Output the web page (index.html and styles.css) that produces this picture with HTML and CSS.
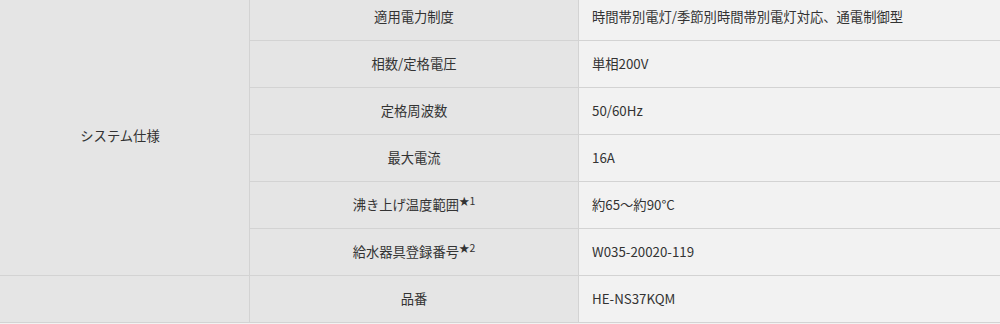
FILE: index.html
```html
<!DOCTYPE html>
<html lang="ja">
<head>
<meta charset="utf-8">
<link rel="stylesheet" href="styles.css">
</head>
<body>
<table class="spec">
  <colgroup>
    <col class="c1"><col class="c2"><col class="c3">
  </colgroup>
  <tbody>
    <tr>
      <th class="group" rowspan="6">システム仕様</th>
      <th class="label">適用電力制度</th>
      <td class="value">時間帯別電灯/季節別時間帯別電灯対応、通電制御型</td>
    </tr>
    <tr>
      <th class="label">相数/定格電圧</th>
      <td class="value">単相200V</td>
    </tr>
    <tr>
      <th class="label">定格周波数</th>
      <td class="value">50/60Hz</td>
    </tr>
    <tr>
      <th class="label">最大電流</th>
      <td class="value">16A</td>
    </tr>
    <tr>
      <th class="label">沸き上げ温度範囲<sup class="note">★1</sup></th>
      <td class="value">約65～約90°C</td>
    </tr>
    <tr>
      <th class="label">給水器具登録番号<sup class="note">★2</sup></th>
      <td class="value">W035-20020-119</td>
    </tr>
    <tr>
      <th class="group"></th>
      <th class="label">品番</th>
      <td class="value">HE-NS37KQM</td>
    </tr>
  </tbody>
</table>
</body>
</html>
```
FILE: styles.css
```css
html, body {
  margin: 0;
  padding: 0;
  background: #f2f2f2;
}
body {
  font-family: "Noto Sans CJK JP", "Noto Sans", sans-serif;
  font-size: 13.3px;
  color: #333;
}
.spec {
  width: 1000px;
  margin-top: -7px;
  border-collapse: separate;
  border-spacing: 0;
  table-layout: fixed;
}
.c1 { width: 250px; }
.c2 { width: 329px; }
.c3 { width: 421px; }
.spec th, .spec td {
  height: 46px;
  padding: 0;
  border-bottom: 1px solid #d3d3d3;
  font-weight: 400;
  line-height: 20px;
  vertical-align: middle;
}
.spec tr:first-child th, .spec tr:first-child td {
  height: 47px;
}
.group {
  background: #e5e5e5;
  border-right: 1px solid #d3d3d3;
  text-align: center;
}
.spec th.group[rowspan] {
  padding: 4px 9px 0 0;
}
.label {
  background: #e5e5e5;
  border-right: 1px solid #d3d3d3;
  text-align: center;
}
.value {
  background: #f2f2f2;
  text-align: left;
  padding-left: 13px !important;
}
.note {
  font-size: 10.5px;
  line-height: 0;
  vertical-align: 5px;
}
```
